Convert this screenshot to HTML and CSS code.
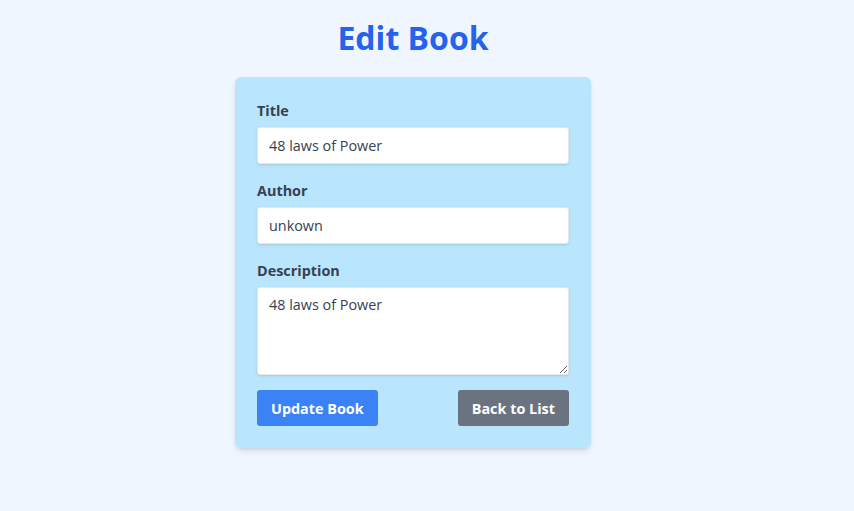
FILE: index.html
```html
<!DOCTYPE html>
<html>
<head>
<meta charset="utf-8">
<link rel="stylesheet" href="styles.css">
</head>
<body>
<main class="page">
  <h1 class="heading">Edit Book</h1>
  <form class="card">
    <div class="field">
      <label class="label">Title</label>
      <input class="input" type="text" value="48 laws of Power">
    </div>
    <div class="field">
      <label class="label">Author</label>
      <input class="input" type="text" value="unkown">
    </div>
    <div class="field">
      <label class="label">Description</label>
      <textarea class="input textarea">48 laws of Power</textarea>
    </div>
    <div class="actions">
      <button type="button" class="btn btn-primary">Update Book</button>
      <button type="button" class="btn btn-secondary">Back to List</button>
    </div>
  </form>
</main>
</body>
</html>
```
FILE: styles.css
```css
* { box-sizing: border-box; }
html, body { margin: 0; padding: 0; }
body {
  background: #eff6ff;
  font-family: "Open Sans", sans-serif;
  color: #374151;
  min-height: 511px;
}
.page {
  display: flex;
  flex-direction: column;
  align-items: center;
  padding-top: 16px;
  padding-right: 28px;
}
.heading {
  margin: 0 0 18px;
  font-size: 32px;
  line-height: 43px;
  font-weight: 700;
  color: #2563eb;
}
.card {
  width: 356px;
  background: #bae6fd;
  border-radius: 6px;
  padding: 22px 22px 22px;
  box-shadow: 0 4px 6px -1px rgba(0,0,0,0.1), 0 2px 4px -2px rgba(0,0,0,0.1);
}
.field {
  display: flex;
  flex-direction: column;
  margin-bottom: 15px;
}
.label {
  font-size: 14.4px;
  line-height: 24px;
  font-weight: 700;
  color: #374151;
  margin-bottom: 4px;
}
.input {
  width: 100%;
  height: 37px;
  border: 1px solid #e5e7eb;
  border-radius: 3px;
  background: #fff;
  padding: 0 11px;
  font-family: "Open Sans", sans-serif;
  font-size: 14.4px;
  color: #374151;
  box-shadow: 0 1px 3px 0 rgba(0,0,0,0.1), 0 1px 2px -1px rgba(0,0,0,0.1);
  outline: none;
}
.textarea {
  height: 88px;
  padding: 6px 11px;
  line-height: 21px;
  resize: vertical;
  display: block;
}
.actions {
  display: flex;
  justify-content: space-between;
  align-items: center;
}
.btn {
  height: 36px;
  border: none;
  border-radius: 3px;
  padding: 0 14px;
  font-family: "Open Sans", sans-serif;
  font-size: 14.4px;
  font-weight: 700;
  color: #fff;
}
.btn-primary { background: #3b82f6; }
.btn-secondary { background: #6b7280; }
```
